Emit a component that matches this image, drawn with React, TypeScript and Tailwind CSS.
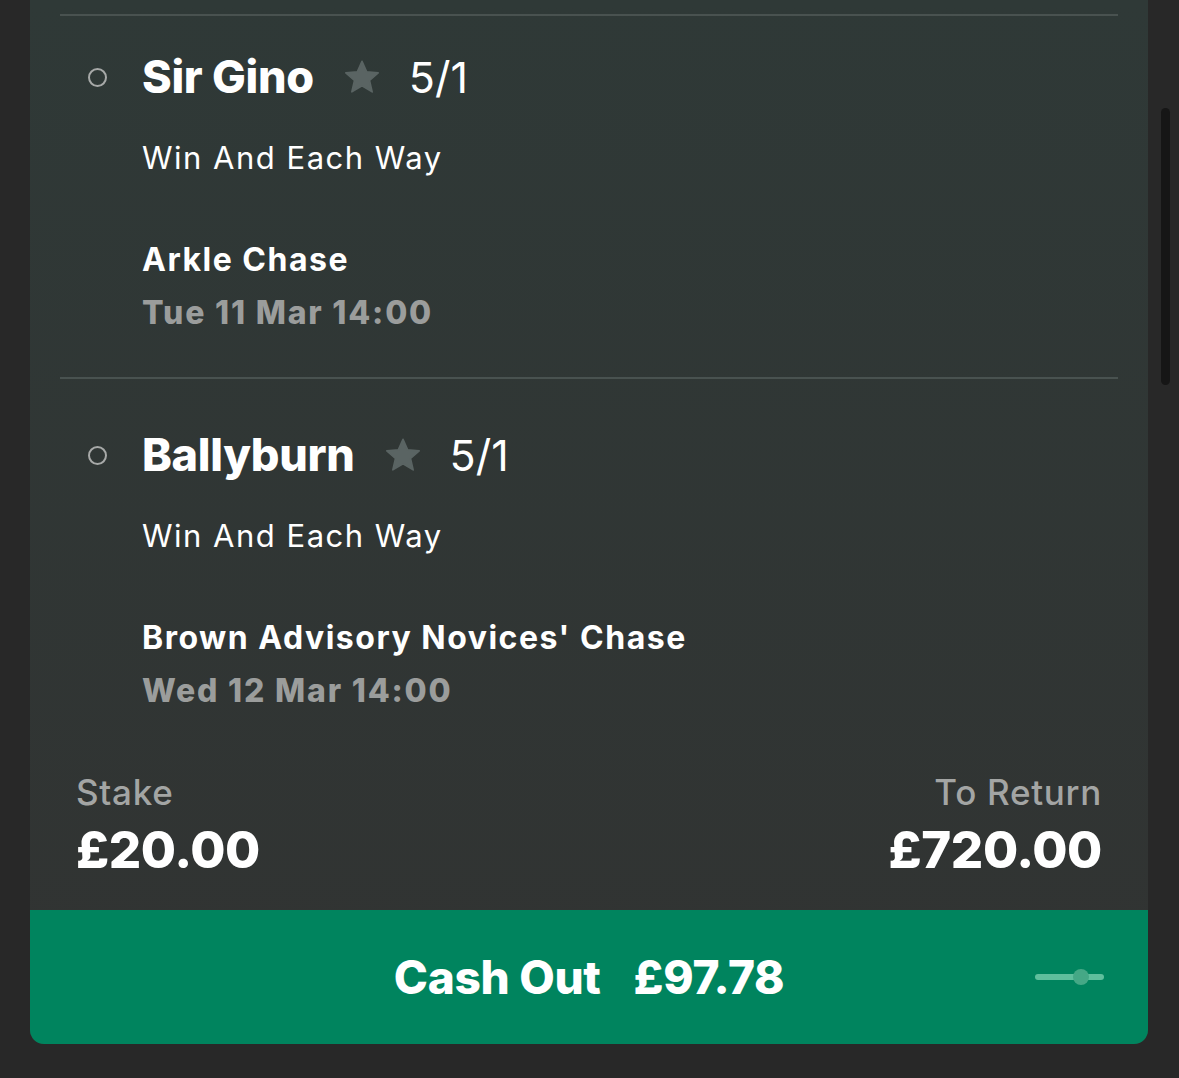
import React from "react";

interface Selection {
	name: string;
	odds: string;
	market: string;
	race: string;
	time: string;
}

const selections: Selection[] = [
	{
		name: "Sir Gino",
		odds: "5/1",
		market: "Win And Each Way",
		race: "Arkle Chase",
		time: "Tue 11 Mar 14:00",
	},
	{
		name: "Ballyburn",
		odds: "5/1",
		market: "Win And Each Way",
		race: "Brown Advisory Novices' Chase",
		time: "Wed 12 Mar 14:00",
	},
];

function StarIcon() {
	return (
		<svg className="h-[40px] w-[40px]" viewBox="0 0 24 24" fill="#5a6463">
			<path
				d="M12 2.6l2.8 6.3 6.9.6-5.2 4.6 1.6 6.8-6.1-3.6-6.1 3.6 1.6-6.8-5.2-4.6 6.9-.6z"
				stroke="#5a6463"
				strokeWidth={1}
				strokeLinejoin="round"
			/>
		</svg>
	);
}

function SelectionRow({ sel, first }: { sel: Selection; first: boolean }) {
	return (
		<div className={first ? "pt-[37px] pb-[46px]" : "pt-[52px]"}>
			<div className="flex h-[48px] items-center">
				<div className="ml-[28px] h-[19px] w-[19px] rounded-full border-[2.5px] border-[#a7a9a8]" />
				<span className="ml-[35px] text-[45px] leading-[48px] font-extrabold tracking-[-0.3px] text-white">
					{sel.name}
				</span>
				<span className="ml-[28px] flex items-center">
					<StarIcon />
				</span>
				<span className="ml-[27px] text-[43px] leading-[48px] font-normal text-white">
					{sel.odds}
				</span>
			</div>
			<div className="mt-[39px] pl-[82px] text-[31px] leading-[36px] font-normal tracking-[1.5px] text-white">
				{sel.market}
			</div>
			<div className="mt-[66px] pl-[82px] text-[32px] leading-[36px] font-bold tracking-[1.5px] text-white">
				{sel.race}
			</div>
			<div className="mt-[17px] pl-[82px] text-[32px] leading-[36px] font-extrabold tracking-[1.8px] text-[#9b9d9c]">
				{sel.time}
			</div>
		</div>
	);
}

export default function App() {
	return (
		<div
			className="relative min-h-[1078px] w-full bg-[#282828] pb-[34px]"
			style={{ fontFamily: "Inter, 'Noto Sans', sans-serif" }}
		>
			{/* Card */}
			<div className="ml-[30px] w-[1118px] overflow-hidden rounded-b-[14px] bg-gradient-to-b from-[#2f3937] to-[#313332]">
				<div className="px-[30px] pt-[14px]">
					{selections.map((sel, i) => (
						<div key={sel.name}>
							<div className="h-[2px] bg-[#495250]" />
							<SelectionRow sel={sel} first={i === 0} />
						</div>
					))}
				</div>

				{/* Stake / return */}
				<div className="flex items-start justify-between px-[46px] pt-[63px] pb-[32px]">
					<div>
						<div className="text-[35px] leading-[40px] font-medium tracking-[0.7px] text-[#a3a5a4]">
							Stake
						</div>
						<div className="mt-[10px] text-[51px] leading-[56px] font-extrabold tracking-[-0.4px] text-white">
							£20.00
						</div>
					</div>
					<div className="text-right">
						<div className="text-[35px] leading-[40px] font-medium tracking-[0.7px] text-[#a3a5a4]">
							To Return
						</div>
						<div className="mt-[10px] text-[51px] leading-[56px] font-extrabold tracking-[-0.4px] text-white">
							£720.00
						</div>
					</div>
				</div>

				{/* Cash out */}
				<div className="relative flex h-[134px] items-center justify-center bg-[#00845e]">
					<span className="text-[46px] leading-[52px] font-extrabold tracking-[-0.3px] text-white">
						Cash Out<span className="ml-[33px]">£97.78</span>
					</span>
					<div className="absolute right-[44px] top-1/2 flex h-[16px] w-[69px] -translate-y-1/2 items-center">
						<div className="h-[6px] w-full rounded-full bg-[#5fbf9d]" />
						<div className="absolute left-[38px] h-[16px] w-[16px] rounded-full bg-[#45a886]" />
					</div>
				</div>
			</div>

			{/* Scrollbar */}
			<div className="absolute left-[1161px] top-[108px] h-[277px] w-[9px] rounded-full bg-[#161616]" />
		</div>
	);
}
